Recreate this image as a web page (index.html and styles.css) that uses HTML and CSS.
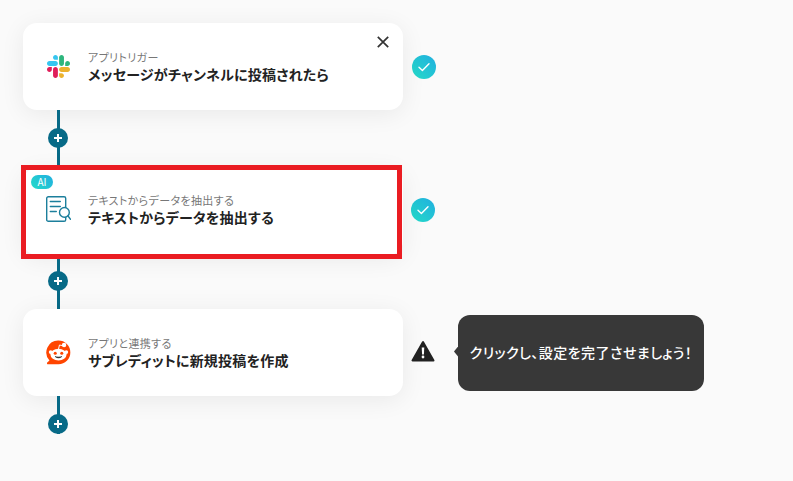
FILE: index.html
```html
<!DOCTYPE html>
<html lang="ja">
<head>
<meta charset="utf-8">
<title>フロー</title>
<link rel="stylesheet" href="styles.css">
</head>
<body>
<main class="flow">
  <section class="row">
    <div class="card">
      <svg class="app-icon app-icon-slack" viewBox="0 0 122.8 122.8" aria-hidden="true">
        <path fill="#E01E5A" d="M25.8 77.6c0 7.1-5.8 12.9-12.9 12.9S0 84.7 0 77.6s5.8-12.9 12.9-12.9h12.9v12.9z"/>
        <path fill="#E01E5A" d="M32.3 77.6c0-7.1 5.8-12.9 12.9-12.9s12.9 5.8 12.9 12.9v32.3c0 7.1-5.8 12.9-12.9 12.9s-12.9-5.8-12.9-12.9V77.6z"/>
        <path fill="#36C5F0" d="M45.2 25.8c-7.1 0-12.9-5.8-12.9-12.9S38.1 0 45.2 0s12.9 5.8 12.9 12.9v12.9H45.2z"/>
        <path fill="#36C5F0" d="M45.2 32.3c7.1 0 12.9 5.8 12.9 12.9s-5.8 12.9-12.9 12.9H12.9C5.8 58.1 0 52.3 0 45.2s5.8-12.9 12.9-12.9h32.3z"/>
        <path fill="#2EB67D" d="M97 45.2c0-7.1 5.8-12.9 12.9-12.9s12.9 5.8 12.9 12.9-5.8 12.9-12.9 12.9H97V45.2z"/>
        <path fill="#2EB67D" d="M90.5 45.2c0 7.1-5.8 12.9-12.9 12.9s-12.9-5.8-12.9-12.9V12.9C64.7 5.8 70.5 0 77.6 0s12.9 5.8 12.9 12.9v32.3z"/>
        <path fill="#ECB22E" d="M77.6 97c7.1 0 12.9 5.8 12.9 12.9s-5.8 12.9-12.9 12.9-12.9-5.8-12.9-12.9V97h12.9z"/>
        <path fill="#ECB22E" d="M77.6 90.5c-7.1 0-12.9-5.8-12.9-12.9s5.8-12.9 12.9-12.9h32.3c7.1 0 12.9 5.8 12.9 12.9s-5.8 12.9-12.9 12.9H77.6z"/>
      </svg>
      <div class="card-text">
        <p class="kicker">アプリトリガー</p>
        <p class="title">メッセージがチャンネルに投稿されたら</p>
      </div>
      <svg class="close" viewBox="0 0 12 12" aria-hidden="true"><path d="M.8.8l10.4 10.4M11.2.8L.8 11.2"/></svg>
    </div>
    <svg class="status" viewBox="0 0 24 24" aria-hidden="true">
      <defs><linearGradient id="g1" x1="0" y1="1" x2="1" y2="0"><stop offset="0" stop-color="#25dcc8"/><stop offset="1" stop-color="#20aee0"/></linearGradient></defs>
      <circle cx="12" cy="12" r="12" fill="url(#g1)"/>
      <path d="M7 12.2l3.4 3.2L17 8.8" fill="none" stroke="#fff" stroke-width="1.4" stroke-linecap="round" stroke-linejoin="round"/>
    </svg>
  </section>

  <div class="connector connector-a"><span class="plus"></span></div>

  <section class="row">
    <div class="card card-raised">
      <span class="ai-badge">AI</span>
      <span class="highlight"></span>
      <svg class="app-icon app-icon-doc" viewBox="0 0 25 26" aria-hidden="true">
        <g fill="none" stroke="#1c7f9c" stroke-width="1.4" stroke-linecap="round">
          <rect x=".7" y=".7" width="19" height="24.6" rx="1.6"/>
          <path d="M4.3 5.5h10M4.3 10.5h10M4.3 15.5h6"/>
          <circle cx="18.4" cy="16.4" r="4.9" fill="#fff"/>
          <path d="M22 20l2.5 3.2"/>
        </g>
      </svg>
      <div class="card-text">
        <p class="kicker">テキストからデータを抽出する</p>
        <p class="title">テキストからデータを抽出する</p>
      </div>
    </div>
    <svg class="status status-shift" viewBox="0 0 24 24" aria-hidden="true">
      <circle cx="12" cy="12" r="12" fill="url(#g1)"/>
      <path d="M7 12.2l3.4 3.2L17 8.8" fill="none" stroke="#fff" stroke-width="1.4" stroke-linecap="round" stroke-linejoin="round"/>
    </svg>
  </section>

  <div class="connector connector-b"><span class="plus"></span></div>

  <section class="row">
    <div class="card">
      <svg class="app-icon" viewBox="0 0 26 26" aria-hidden="true">
        <path fill="#ff4500" d="M13 .6a12.3 12.3 0 1 1 0 24.6H2a1 1 0 0 1-.7-1.7l2.3-2.3A12.3 12.3 0 0 1 13 .6z"/>
        <ellipse cx="13" cy="15.2" rx="8.4" ry="6" fill="#fff"/>
        <circle cx="4.9" cy="12.6" r="2" fill="#fff"/>
        <circle cx="21.1" cy="12.6" r="2" fill="#fff"/>
        <circle cx="18.8" cy="5.2" r="2.3" fill="#fff"/>
        <path d="M13 9.5l1-4.3 3.5.7" fill="none" stroke="#fff" stroke-width="1"/>
        <circle cx="9.6" cy="13.8" r="1.6" fill="#ff4500"/>
        <circle cx="16.4" cy="13.8" r="1.6" fill="#ff4500"/>
        <path d="M9.5 17.2c1.8 1.8 5.2 1.8 7 0-1.8.7-5.2.7-7 0z" fill="#222" stroke="#222" stroke-width=".6"/>
      </svg>
      <div class="card-text">
        <p class="kicker">アプリと連携する</p>
        <p class="title">サブレディットに新規投稿を作成</p>
      </div>
    </div>
    <svg class="status status-warn" viewBox="0 0 24 22" aria-hidden="true">
      <path fill="#222" stroke="#222" stroke-width="2" stroke-linejoin="round" d="M12 2L1.5 20.5h21z"/>
      <path fill="#fff" d="M10.7 7.5h2.6l-.4 7h-1.8z"/>
      <circle cx="12" cy="17" r="1.4" fill="#fff"/>
    </svg>
    <div class="tooltip">クリックし、設定を完了させましょう！</div>
  </section>

  <div class="connector connector-c"><span class="plus"></span></div>
</main>
</body>
</html>
```
FILE: styles.css
```css
* { box-sizing: border-box; }
html, body { margin: 0; height: 100%; }
body {
  background: #fafafa;
  font-family: "Noto Sans CJK JP", "Noto Sans", sans-serif;
  overflow: hidden;
}
.flow {
  display: flex;
  flex-direction: column;
  align-items: flex-start;
  padding: 23px 0 0 23px;
}
.row {
  display: flex;
  align-items: center;
}
.card {
  position: relative;
  display: flex;
  align-items: center;
  gap: 19px;
  width: 380px;
  height: 87px;
  padding-left: 23px;
  background: #fff;
  border-radius: 14px;
  box-shadow: 0 4px 24px rgba(0, 0, 0, .07);
}
.card-raised { padding-bottom: 5px; }
.app-icon {
  flex: none;
  width: 25px;
  height: 25px;
  margin-right: -2px;
}
.app-icon-slack {
  width: 23px;
  height: 23px;
  margin-left: 1px;
  margin-right: -1px;
}
.app-icon-doc { height: 26px; }
.card-text { min-width: 0; }
.kicker {
  margin: 0;
  font-size: 11px;
  line-height: 16px;
  letter-spacing: .35px;
  color: #777;
  font-feature-settings: "palt";
}
.title {
  margin: 0;
  font-size: 14px;
  line-height: 19px;
  letter-spacing: .22px;
  font-weight: 700;
  color: #222;
  font-feature-settings: "palt";
}
.close {
  position: absolute;
  top: 13px;
  right: 14px;
  width: 12px;
  height: 12px;
  fill: none;
  stroke: #333;
  stroke-width: 1.7;
}
.status {
  flex: none;
  width: 24px;
  height: 24px;
  margin-left: 9px;
}
.status-shift { margin: -3px 0 0 8px; }
.status-warn { height: 22px; margin-left: 8px; margin-top: -4px; }
.ai-badge {
  position: absolute;
  z-index: 2;
  top: 7px;
  left: 8px;
  width: 22px;
  height: 14px;
  border-radius: 7px;
  background: linear-gradient(45deg, #25dcc8, #20aee0);
  color: #fff;
  font-size: 10px;
  line-height: 14px;
  text-align: center;
}
.highlight {
  position: absolute;
  z-index: 1;
  top: -3px;
  left: -2px;
  right: 1px;
  bottom: -4px;
  border: 5px solid #ea1c22;
  pointer-events: none;
}
.connector {
  position: relative;
  display: flex;
  align-items: center;
  justify-content: center;
  width: 20px;
  margin-left: 25px;
}
.connector::before {
  content: "";
  position: absolute;
  top: 0;
  bottom: 0;
  left: 9px;
  width: 2.5px;
  background: #076a87;
}
.connector-a { height: 58px; padding-bottom: 2px; }
.connector-b { height: 54px; padding-bottom: 2px; }
.connector-c { height: 38px; align-items: flex-end; }
.plus {
  position: relative;
  width: 20px;
  height: 20px;
  border-radius: 50%;
  background:
    linear-gradient(#fff, #fff) center / 8px 2px no-repeat,
    linear-gradient(#fff, #fff) center / 2px 8px no-repeat,
    #076a87;
}
.tooltip {
  position: relative;
  flex: none;
  display: flex;
  align-items: center;
  justify-content: center;
  width: 246px;
  height: 76px;
  margin-left: 23px;
  padding-bottom: 2px;
  border-radius: 12px;
  background: #383838;
  color: #fff;
  font-size: 14px;
  font-weight: 500;
  letter-spacing: .45px;
  font-feature-settings: "palt";
}
.tooltip::before {
  content: "";
  position: absolute;
  top: 32px;
  left: -4px;
  width: 8px;
  height: 10px;
  background: #383838;
  clip-path: polygon(50% 0, 100% 0, 100% 100%, 50% 100%, 0 50%);
}
```
